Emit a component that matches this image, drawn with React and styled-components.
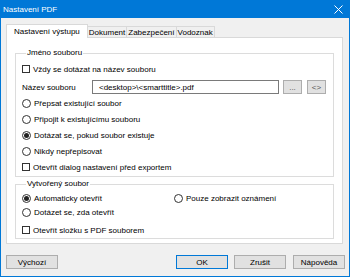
import React from "react";
import styled, { createGlobalStyle } from "styled-components";

const GlobalStyle = createGlobalStyle`
  html, body {
    margin: 0;
    padding: 0;
    background: #ffffff;
  }
  * {
    box-sizing: border-box;
  }
`;

const Window = styled.div`
  width: 350px;
  height: 277px;
  display: flex;
  flex-direction: column;
  font-family: "Liberation Sans", Arial, sans-serif;
  font-size: 8px;
  color: #000;
  background: #f0f0f0;
  border: 1px solid #0078d7;
  border-top: none;
`;

const TitleBar = styled.div`
  height: 18px;
  margin: 0 -1px;
  padding: 0 7px 0 3px;
  display: flex;
  align-items: center;
  justify-content: space-between;
  background: #0078d7;
  color: #fff;
  font-size: 8px;
`;

const TabRow = styled.div`
  display: flex;
  align-items: flex-end;
  margin-top: 6px;
  padding-left: 5px;
  height: 13px;
`;

const Tab = styled.div`
  display: flex;
  align-items: center;
  position: relative;
  height: ${(p) => (p.$active ? "14px" : "11px")};
  padding: ${(p) => (p.$active ? "0 7px 1px" : "0 1px")};
  margin-bottom: ${(p) => (p.$active ? "-1px" : "0")};
  margin-left: ${(p) => (p.$active ? "0" : "-1px")};
  background: ${(p) => (p.$active ? "#fff" : "#f0f0f0")};
  border: 1px solid #d9d9d9;
  border-bottom: none;
  z-index: ${(p) => (p.$active ? 1 : 0)};
  white-space: nowrap;
`;

const Panel = styled.div`
  margin: 0 6px 0 5px;
  height: 207px;
  background: #fff;
  border: 1px solid #d9d9d9;
  padding: 10px 8px 3px 8px;
  display: flex;
  flex-direction: column;
`;

const Group = styled.fieldset`
  margin: ${(p) => p.$mt || 0}px 0 0 0;
  padding: 0 6px ${(p) => p.$pb || 0}px 6px;
  border: 1px solid #dcdcdc;
  display: flex;
  flex-direction: column;
  min-width: 0;
`;

const Legend = styled.legend`
  padding: 0 1px;
  margin-left: 4px;
  line-height: 10px;
  color: #000;
`;

const Row = styled.div`
  display: flex;
  align-items: center;
  height: ${(p) => p.$h || 16}px;
  margin-top: ${(p) => p.$mt || 0}px;
  gap: 3px;
`;

const Split = styled.div`
  display: flex;
  align-items: center;
`;

const Half = styled.div`
  width: 152px;
  display: flex;
  align-items: center;
  gap: 3px;
`;

const Check = styled.span`
  width: 8px;
  height: 8px;
  border: 1px solid #333;
  background: #fff;
  flex: none;
`;

const Radio = styled.span`
  width: 9px;
  height: 9px;
  border: 1px solid #333;
  border-radius: 50%;
  background: #fff;
  flex: none;
  display: flex;
  align-items: center;
  justify-content: center;

  &::after {
    content: "";
    width: 5px;
    height: 5px;
    border-radius: 50%;
    background: ${(p) => (p.$on ? "#222" : "transparent")};
  }
`;

const Label = styled.span`
  white-space: nowrap;
`;

const FieldLabel = styled.span`
  width: 67px;
  white-space: nowrap;
`;

const Input = styled.div`
  width: 187px;
  height: 14px;
  border: 1px solid #7a7a7a;
  padding-left: 6px;
  display: flex;
  align-items: center;
  white-space: nowrap;
`;

const SmallButton = styled.div`
  width: 19px;
  height: 14px;
  margin-left: ${(p) => p.$ml || 0}px;
  background: #e1e1e1;
  border: 1px solid #adadad;
  display: flex;
  align-items: center;
  justify-content: center;
  color: #555;
`;

const ButtonBar = styled.div`
  display: flex;
  align-items: center;
  margin-top: 11px;
  padding: 0 4px 0 5px;
`;

const Button = styled.div`
  width: 52px;
  height: 14px;
  margin-left: ${(p) => p.$ml || 0}px;
  background: #e1e1e1;
  border: 1px solid ${(p) => (p.$default ? "#0078d7" : "#adadad")};
  display: flex;
  align-items: center;
  justify-content: center;
`;

const Spacer = styled.div`
  flex: 1;
`;

const CloseIcon = () => (
  <svg width="9" height="9" viewBox="0 0 9 9">
    <path d="M0.5 0.5L8.5 8.5M8.5 0.5L0.5 8.5" stroke="#fff" strokeWidth="1" />
  </svg>
);

export default function App() {
  return (
    <>
      <GlobalStyle />
      <Window>
        <TitleBar>
          <span>Nastavení PDF</span>
          <CloseIcon />
        </TitleBar>
        <TabRow>
          <Tab $active>Nastavení výstupu</Tab>
          <Tab>Dokument</Tab>
          <Tab>Zabezpečení</Tab>
          <Tab>Vodoznak</Tab>
        </TabRow>
        <Panel>
          <Group $pb={1}>
            <Legend>Jméno souboru</Legend>
            <Row $mt={3}>
              <Check />
              <Label>Vždy se dotázat na název souboru</Label>
            </Row>
            <Row $mt={2} $h={16}>
              <FieldLabel>Název souboru</FieldLabel>
              <Input>&lt;desktop&gt;\&lt;smarttitle&gt;.pdf</Input>
              <SmallButton $ml={1}>...</SmallButton>
              <SmallButton $ml={2}>&lt;&gt;</SmallButton>
            </Row>
            <Row>
              <Radio />
              <Label>Přepsat existující soubor</Label>
            </Row>
            <Row>
              <Radio />
              <Label>Připojit k existujícímu souboru</Label>
            </Row>
            <Row>
              <Radio $on />
              <Label>Dotázat se, pokud soubor existuje</Label>
            </Row>
            <Row>
              <Radio />
              <Label>Nikdy nepřepisovat</Label>
            </Row>
            <Row>
              <Check />
              <Label>Otevřít dialog nastavení před exportem</Label>
            </Row>
          </Group>
          <Group $mt={2} $pb={1}>
            <Legend>Vytvořený soubor</Legend>
            <Split>
              <Half>
                <Row $mt={2} $h={14}>
                  <Radio $on />
                  <Label>Automaticky otevřít</Label>
                </Row>
              </Half>
              <Half>
                <Row $mt={2} $h={14}>
                  <Radio />
                  <Label>Pouze zobrazit oznámení</Label>
                </Row>
              </Half>
            </Split>
            <Row $h={14}>
              <Radio />
              <Label>Dotázet se, zda otevřít</Label>
            </Row>
            <Row $mt={4} $h={14}>
              <Check />
              <Label>Otevřít složku s PDF souborem</Label>
            </Row>
          </Group>
        </Panel>
        <ButtonBar>
          <Button>Výchozí</Button>
          <Spacer />
          <Button $default>OK</Button>
          <Button $ml={6}>Zrušit</Button>
          <Button $ml={7}>Nápověda</Button>
        </ButtonBar>
      </Window>
    </>
  );
}
